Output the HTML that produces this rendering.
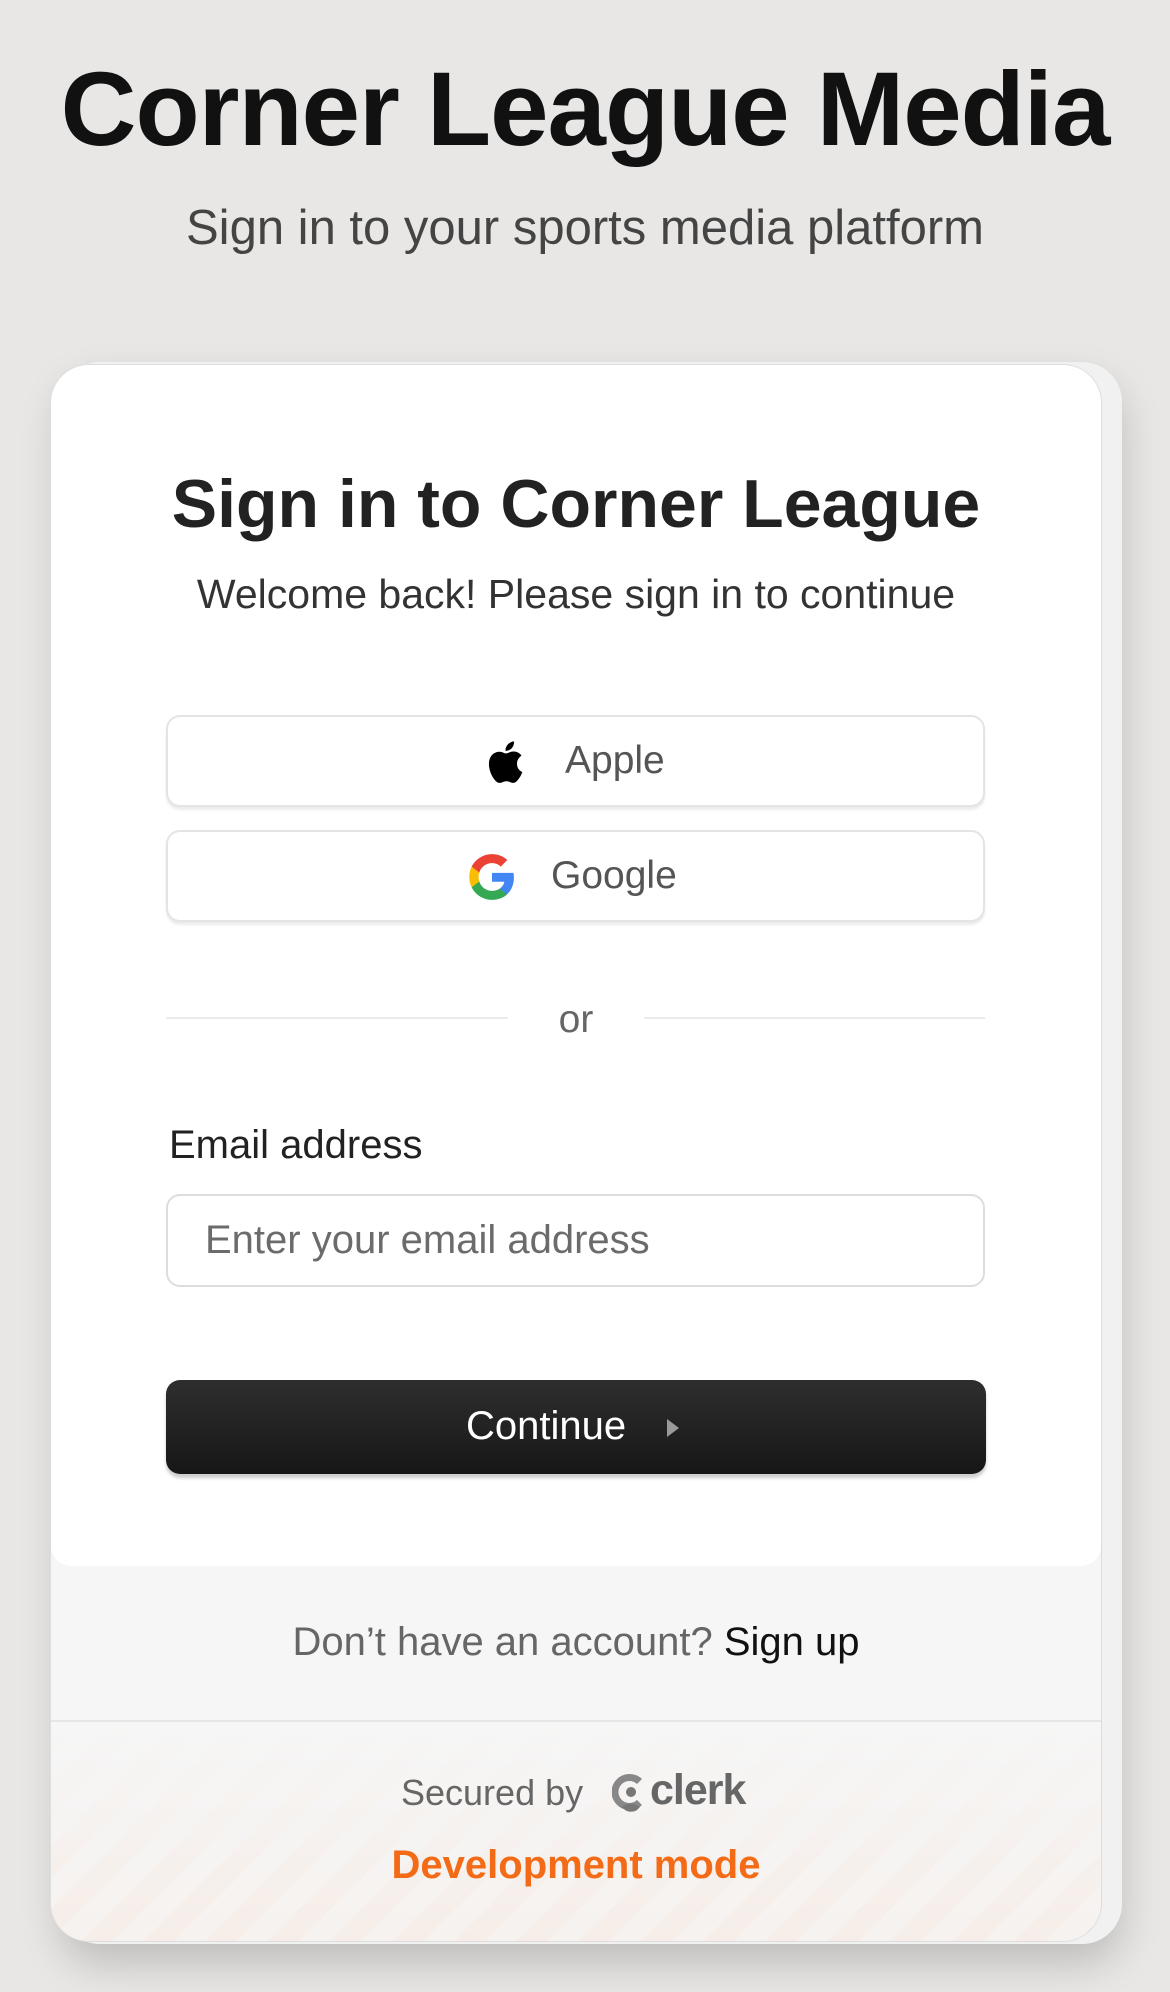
<!DOCTYPE html>
<html><head><meta charset="utf-8"><style>
*{margin:0;padding:0;box-sizing:border-box}
body{width:1170px;height:1992px;background:#e8e7e5;font-family:"Liberation Sans",sans-serif;position:relative;overflow:hidden}
.a{position:absolute;white-space:nowrap}
.c{left:0;width:1170px;text-align:center}
.k{left:51px;width:1050px;text-align:center}
.back{position:absolute;left:60px;top:362px;width:1062px;height:1582px;border-radius:40px;background:#f1f1f1;box-shadow:0 20px 40px rgba(0,0,0,.18)}
.card{position:absolute;left:51px;top:365px;width:1050px;height:1576px;border-radius:38px;overflow:hidden;background:#f6f6f6;box-shadow:0 0 0 1px #ddd}
.white{position:absolute;left:0;top:0;width:1050px;height:1201px;background:#fff;border-radius:0 0 20px 20px}
.dev{position:absolute;left:0;top:1355px;width:1050px;height:221px;border-top:2px solid #e6e6e6;
background:linear-gradient(to bottom,#f6f6f6 0%,rgba(246,246,246,.45) 100%),repeating-linear-gradient(135deg,#f7e6dc 0 22px,#f7efea 22px 44px)}
.btn{position:absolute;left:166px;width:819px;height:92px;border:2px solid #e4e4e4;border-radius:14px;background:#fff;box-shadow:0 3px 2px rgba(0,0,0,.08)}
.t{font-size:39px;color:#555}
</style></head><body>
<div class="a c" style="top:50px;font-size:105px;font-weight:bold;color:#111;letter-spacing:-1px">Corner League Media</div>
<div class="a c" style="top:200px;font-size:49px;color:#444">Sign in to your sports media platform</div>
<div class="back"></div>
<div class="card">
<div class="white"></div>
<div class="dev"></div>
</div>
<div class="a k" style="top:465px;font-size:68px;font-weight:bold;color:#222;letter-spacing:0">Sign in to Corner League</div>
<div class="a k" style="top:571px;font-size:41px;color:#333">Welcome back! Please sign in to continue</div>
<div class="btn" style="top:715px"></div>
<svg class="a" style="left:483px;top:738px" width="42" height="48" viewBox="0 0 24 28"><path fill="#000" d="M19.6 14.9c0-3 2.5-4.5 2.6-4.6-1.4-2.1-3.6-2.4-4.4-2.4-1.9-.2-3.6 1.1-4.6 1.1-1 0-2.4-1.1-4-1-2 0-3.9 1.2-5 3-2.1 3.700-.5 9.200 1.500 12.200 1 1.500 2.200 3.100 3.800 3 1.500-.1 2.100-1 3.900-1s2.300 1 3.900 1c1.600 0 2.700-1.500 3.700-3 1.200-1.700 1.600-3.300 1.700-3.400-.1 0-3.200-1.200-3.100-4.900zM16.600 5.900c.8-1 1.400-2.400 1.200-3.900-1.200.1-2.700.8-3.600 1.800-.8.900-1.500 2.300-1.300 3.700 1.400.1 2.800-.7 3.700-1.600z"/></svg>
<div class="a t" style="left:565px;top:739px">Apple</div>
<div class="btn" style="top:830px"></div>
<svg class="a" style="left:467px;top:852px" width="50" height="50" viewBox="0 0 48 48"><path fill="#4285F4" d="M45 24.5c0-1.6-.1-3-.4-4.5H24v8.5h11.8c-.5 2.700-2.100 5-4.400 6.600v5.500h7.100C42.600 36.800 45 31.200 45 24.500z"/><path fill="#34A853" d="M24 46c5.900 0 10.900-2 14.500-5.300l-7.100-5.500c-2 1.300-4.500 2.100-7.400 2.100-5.700 0-10.500-3.800-12.200-9H4.500v5.700C8.100 41.100 15.500 46 24 46z"/><path fill="#FBBC05" d="M11.800 28.300c-.4-1.300-.7-2.800-.7-4.300s.3-3 .7-4.300V14H4.500C3 17 2.200 20.400 2.200 24s.8 7 2.300 10l7.300-5.700z"/><path fill="#EA4335" d="M24 10.700c3.200 0 6.100 1.100 8.400 3.300l6.300-6.300C34.900 4.100 29.900 2 24 2 15.500 2 8.100 6.900 4.500 14l7.300 5.700c1.700-5.200 6.500-9 12.200-9z"/></svg>
<div class="a t" style="left:551px;top:854px">Google</div>
<div class="a" style="left:166px;top:1017px;width:342px;height:2px;background:#ebebeb"></div>
<div class="a" style="left:644px;top:1017px;width:341px;height:2px;background:#ebebeb"></div>
<div class="a k t" style="top:998px;color:#666">or</div>
<div class="a" style="left:169px;top:1123px;font-size:40px;color:#222">Email address</div>
<div class="a" style="left:166px;top:1194px;width:819px;height:93px;border:2px solid #ddd;border-radius:14px;background:#fff"></div>
<div class="a" style="left:205px;top:1218px;font-size:40px;color:#6b6b6b">Enter your email address</div>
<div class="a" style="left:166px;top:1380px;width:820px;height:94px;border-radius:14px;background:linear-gradient(#2e2e2f,#171717);box-shadow:0 4px 3px rgba(0,0,0,.2)"></div>
<div class="a" style="left:466px;top:1404px;font-size:40px;color:#fff">Continue</div>
<svg class="a" style="left:666px;top:1418px" width="14" height="20" viewBox="0 0 14 20"><path fill="#9a9a9a" d="M1 1l12 9-12 9z"/></svg>
<div class="a k" style="top:1620px;font-size:40px;color:#666">Don’t have an account? <span style="color:#111">Sign up</span></div>
<div class="a" style="left:401px;top:1772px;font-size:36px;color:#666">Secured by</div>
<svg class="a" style="left:612px;top:1772px" width="36" height="40" viewBox="0 0 36 40"><path fill="#888" d="M18 2a18 18 0 1 0 12 31l-5-5a11 11 0 1 1 0-16l5-5A18 18 0 0 0 18 2z"/><circle cx="19" cy="20" r="5" fill="#777"/><path fill="#777" d="M10 35a14 14 0 0 1 18 0l-3 3a11 11 0 0 1-12 0z"/></svg>
<div class="a" style="left:650px;top:1766px;font-size:43px;font-weight:bold;color:#666;letter-spacing:-1px">clerk</div>
<div class="a k" style="top:1843px;font-size:40px;font-weight:bold;color:#f36b16">Development mode</div>
</body></html>
